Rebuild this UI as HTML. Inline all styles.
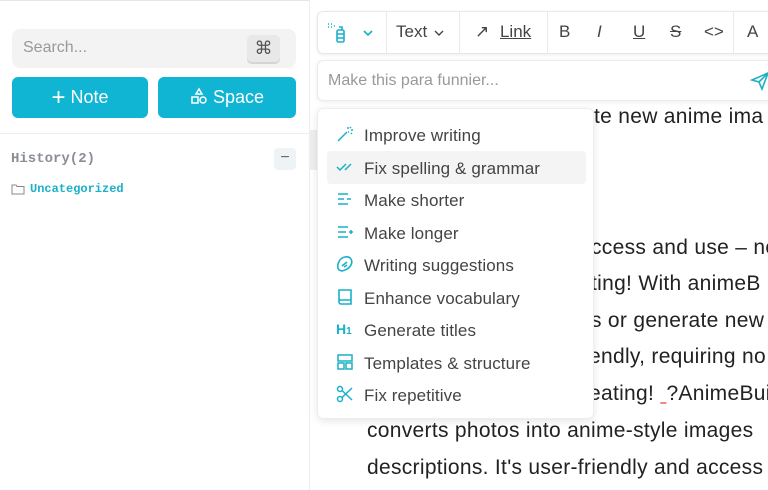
<!DOCTYPE html>
<html><head><meta charset="utf-8"><style>
*{box-sizing:border-box;margin:0;padding:0}
body{width:768px;height:490px;overflow:hidden;background:#fff;font-family:"Liberation Sans",sans-serif;position:relative;color:#222}
.abs{position:absolute}
.side{left:0;top:0;width:310px;height:490px;border-right:1px solid #eee;border-top:1px solid #e6e6e6}
.search{left:12px;top:29px;width:284px;height:39px;background:#f3f3f3;border-radius:8px;color:#999;font-size:16px;padding:10px 11px}
.kbd{left:247px;top:35px;width:33px;height:27px;background:#e8e8e8;border-radius:5px;box-shadow:0 2px 0 #d5d5d5;color:#555;font-size:18px;text-align:center;line-height:26px}
.btn{top:77px;height:41px;background:#0fb5d2;border-radius:6px;color:#fff;font-size:18px;text-align:center;line-height:41px}
.hist{left:11px;top:151px;font-family:"Liberation Mono",monospace;font-weight:bold;color:#8a8f96;font-size:14px}
.unc{left:30px;top:182px;font-family:"Liberation Mono",monospace;font-weight:bold;color:#1ab0c8;font-size:12px}
.minus{left:274px;top:148px;width:22px;height:22px;background:#eef3f6;border-radius:4px;color:#666;text-align:center;line-height:20px;font-size:16px}
.tb{left:317px;top:11px;width:460px;height:43px;border:1px solid #e8e8e8;border-radius:6px;background:#fff;box-shadow:0 1px 3px rgba(0,0,0,.08)}
.sep{top:12px;width:1px;height:41px;background:#eaeaea}
.tt{top:22px;font-size:17px;color:#444}
.prompt{left:317px;top:60px;width:460px;height:41px;border:1px solid #ececec;border-radius:6px;box-shadow:0 1px 4px rgba(0,0,0,.08);background:#fff;color:#999;font-size:16px;padding:11px 10px}
.menu{left:317px;top:108px;width:277px;height:311px;background:#fff;border:1px solid #eee;border-radius:6px;box-shadow:0 2px 8px rgba(0,0,0,.1);z-index:5}
.hl{left:9px;top:42px;width:259px;height:33px;background:#f4f4f4;border-radius:4px}
.it{left:46px;font-size:17px;color:#444;letter-spacing:0.1px}
.ic{left:18px;width:18px;height:18px}
.bt{font-size:21px;color:#222;white-space:nowrap;letter-spacing:0.3px}
</style></head><body>
<div class="abs side"></div>
<div class="abs search">Search...</div>
<div class="abs kbd">⌘</div>
<div class="abs btn" style="left:12px;width:136px"><span style="font-size:24px;vertical-align:-2px">+</span> Note</div>
<div class="abs btn" style="left:158px;width:138px"><svg width="18" height="18" viewBox="0 0 18 18" style="vertical-align:-2px" fill="none" stroke="#fff" stroke-width="1.5"><path d="M9 2l3 5H6z"/><rect x="2" y="10" width="6" height="6"/><circle cx="13" cy="13" r="3"/></svg> Space</div>
<div class="abs" style="left:0;top:133px;width:310px;height:1px;background:#eee"></div>
<div class="abs hist">History(2)</div>
<div class="abs minus">−</div>
<svg class="abs" style="left:11px;top:183px" width="14" height="12" viewBox="0 0 14 12" fill="none" stroke="#888" stroke-width="1"><path d="M1 2h4l1 1.5h7V11H1z"/></svg>
<div class="abs unc">Uncategorized</div>
<div class="abs" style="left:310px;top:130px;width:7px;height:40px;background:#eee"></div>

<div class="abs tb"></div>
<svg class="abs" style="left:327px;top:22px" width="22" height="22" viewBox="0 0 22 22" fill="none" stroke="#1ab0c8" stroke-width="1.6"><path d="M1 2h1M4 2h1M1 5h1M4 5h1M7 4h1"/><rect x="10" y="8" width="7" height="12" rx="1.5"/><path d="M12 5h3v3M10 12h7M10 16h7"/></svg>
<svg class="abs" style="left:362px;top:28px" width="12" height="10" viewBox="0 0 12 10" fill="none" stroke="#1ab0c8" stroke-width="1.6"><path d="M2 3l4 4 4-4"/></svg>
<div class="abs sep" style="left:386px"></div>
<div class="abs tt" style="left:396px">Text</div>
<svg class="abs" style="left:433px;top:28px" width="12" height="10" viewBox="0 0 12 10" fill="none" stroke="#444" stroke-width="1.4"><path d="M2 3l4 4 4-4"/></svg>
<div class="abs sep" style="left:459px"></div>
<div class="abs tt" style="left:475px">↗ <span style="text-decoration:underline;margin-left:6px">Link</span></div>
<div class="abs sep" style="left:547px"></div>
<div class="abs tt" style="left:559px">B</div>
<div class="abs tt" style="left:597px;font-style:italic">I</div>
<div class="abs tt" style="left:633px;text-decoration:underline">U</div>
<div class="abs tt" style="left:670px;text-decoration:line-through">S</div>
<div class="abs tt" style="left:704px">&lt;&gt;</div>
<div class="abs sep" style="left:733px"></div>
<div class="abs tt" style="left:747px">A</div>
<div class="abs prompt">Make this para funnier...</div>
<svg class="abs" style="left:750px;top:71px" width="20" height="20" viewBox="0 0 20 20" fill="none" stroke="#1ab0c8" stroke-width="1.6"><path d="M2 9L18 2 12 18 9 11z M9 11L18 2"/></svg>

<div class="abs bt" style="left:594px;top:105px">te new anime ima</div>
<div class="abs bt" style="left:591px;top:236px">ccess and use – no</div>
<div class="abs bt" style="left:591px;top:272px">ting! With animeB</div>
<div class="abs bt" style="left:591px;top:309px">s or generate new</div>
<div class="abs bt" style="left:589px;top:345px">endly, requiring no</div>
<div class="abs bt" style="left:589px;top:382px">eating! <span style="text-decoration:underline;text-decoration-color:#e88">&nbsp;</span>?AnimeBui</div>
<div class="abs bt" style="left:367px;top:419px">converts photos into anime-style images</div>
<div class="abs bt" style="left:367px;top:456px">descriptions. It's user-friendly and access</div>

<div class="abs menu">
<div class="abs hl"></div>
<svg class="abs ic" style="top:16px" viewBox="0 0 18 18" fill="none" stroke="#1ab0c8" stroke-width="1.5"><path d="M2 16L11 7M12 2v2M15 5h2M14 3l1-1M12 7h1M15 8l1 1"/></svg>
<div class="abs it" style="top:17px">Improve writing</div>
<svg class="abs ic" style="top:49px" viewBox="0 0 18 18" fill="none" stroke="#1ab0c8" stroke-width="1.5"><path d="M1 9l3 3 6-6M9 12l6-6"/></svg>
<div class="abs it" style="top:50px">Fix spelling &amp; grammar</div>
<svg class="abs ic" style="top:81px" viewBox="0 0 18 18" fill="none" stroke="#1ab0c8" stroke-width="1.5"><path d="M2 4h10M2 9h6M11 9h4M2 14h10"/></svg>
<div class="abs it" style="top:82px">Make shorter</div>
<svg class="abs ic" style="top:114px" viewBox="0 0 18 18" fill="none" stroke="#1ab0c8" stroke-width="1.5"><path d="M2 4h10M2 9h8M2 14h10M13 9h4M15 7v4"/></svg>
<div class="abs it" style="top:115px">Make longer</div>
<svg class="abs ic" style="top:146px" viewBox="0 0 18 18" fill="none" stroke="#1ab0c8" stroke-width="1.6"><path d="M3 15C0 11 3 3 9 2s8 4 6 8-6 5-9 6z M6 11l5-4M8 12l3-2"/></svg>
<div class="abs it" style="top:147px">Writing suggestions</div>
<svg class="abs ic" style="top:179px" viewBox="0 0 18 18" fill="none" stroke="#1ab0c8" stroke-width="1.6"><path d="M3 2h12v14H5a2 2 0 01-2-2z M3 13a2 2 0 012-1h10"/></svg>
<div class="abs it" style="top:180px">Enhance vocabulary</div>
<div class="abs" style="left:18px;top:212px;font-size:14px;font-weight:bold;color:#1ab0c8">H<span style="font-size:10px">1</span></div>
<div class="abs it" style="top:212px">Generate titles</div>
<svg class="abs ic" style="top:244px" viewBox="0 0 18 18" fill="none" stroke="#1ab0c8" stroke-width="1.5"><rect x="2" y="2" width="14" height="6"/><rect x="2" y="10" width="6" height="6"/><rect x="10" y="10" width="6" height="6"/></svg>
<div class="abs it" style="top:245px">Templates &amp; structure</div>
<svg class="abs ic" style="top:276px" viewBox="0 0 18 18" fill="none" stroke="#1ab0c8" stroke-width="1.5"><circle cx="4" cy="4" r="2.5"/><circle cx="4" cy="14" r="2.5"/><path d="M6 5.5L16 15M6 12.5L16 3"/></svg>
<div class="abs it" style="top:277px">Fix repetitive</div>
</div>
</body></html>
